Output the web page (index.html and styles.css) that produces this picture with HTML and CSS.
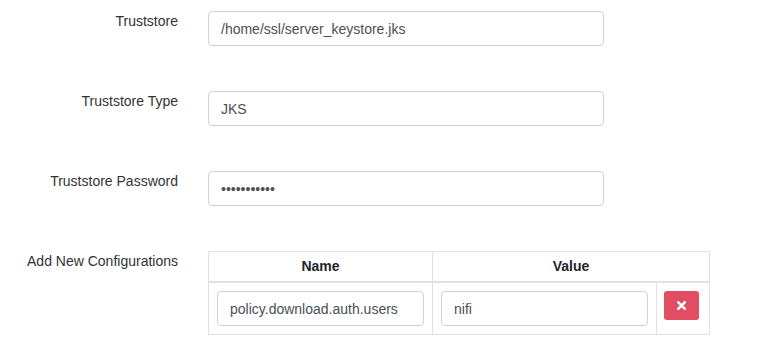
FILE: index.html
```html
<!DOCTYPE html>
<html>
<head>
<meta charset="utf-8">
<link rel="stylesheet" href="styles.css">
</head>
<body>
<form class="form">
  <div class="row">
    <label class="label">Truststore</label>
    <input class="control" type="text" value="/home/ssl/server_keystore.jks">
  </div>
  <div class="row">
    <label class="label">Truststore Type</label>
    <input class="control" type="text" value="JKS">
  </div>
  <div class="row">
    <label class="label">Truststore Password</label>
    <input class="control" type="password" value="abcdefghijk">
  </div>
  <div class="row">
    <label class="label">Add New Configurations</label>
    <table class="config">
      <colgroup><col class="c-name"><col class="c-value"><col class="c-act"></colgroup>
      <thead>
        <tr><th>Name</th><th colspan="2">Value</th></tr>
      </thead>
      <tbody>
        <tr>
          <td><input class="control" type="text" value="policy.download.auth.users"></td>
          <td><input class="control" type="text" value="nifi"></td>
          <td><button type="button" class="btn-del"><svg width="9" height="9" viewBox="0 0 9 9"><path d="M1.3 1.3 L7.7 7.7 M7.7 1.3 L1.3 7.7" stroke="#fff" stroke-width="2.6" stroke-linecap="square"/></svg></button></td>
        </tr>
      </tbody>
    </table>
  </div>
</form>
</body>
</html>
```
FILE: styles.css
```css
html, body {
  margin: 0;
  padding: 0;
  background: #fff;
}
body {
  font-family: "Liberation Sans", Arial, sans-serif;
  font-size: 14px;
  line-height: 21px;
  color: #212529;
  padding-top: 11px;
}
.form {
  display: flex;
  flex-direction: column;
  gap: 45px;
}
.row {
  display: grid;
  grid-template-columns: 178px auto;
  column-gap: 30px;
  align-items: start;
}
.label {
  text-align: right;
  color: #333;
  line-height: 21px;
}
.control {
  box-sizing: border-box;
  width: 396px;
  height: 35px;
  padding: 6px 12px;
  font-family: "Liberation Sans", Arial, sans-serif;
  font-size: 14px;
  line-height: 21px;
  color: #495057;
  border: 1px solid #ced4da;
  border-radius: 4px;
  background: #fff;
  margin: 0;
  outline: none;
}
.config {
  border-collapse: collapse;
  table-layout: fixed;
  width: 501px;
}
.c-name { width: 224px; }
.c-value { width: 224px; }
.c-act { width: 53px; }
.config th, .config td {
  border: 1px solid #dee2e6;
}
.config th {
  padding: 4px 8px;
  font-weight: bold;
  text-align: center;
  border-bottom-width: 2px;
  color: #212529;
}
.config td {
  padding: 8px;
  vertical-align: top;
}
.config td .control {
  width: 100%;
  display: block;
}
.btn-del {
  display: flex;
  align-items: center;
  justify-content: center;
  width: 35px;
  height: 29px;
  padding: 0;
  border: none;
  border-radius: 3px;
  background: #e14d62;
  margin-left: -1px;
}
```
